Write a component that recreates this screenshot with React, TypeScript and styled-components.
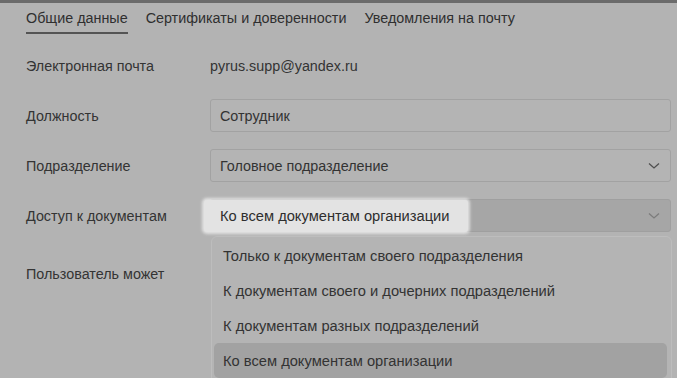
import styled, { createGlobalStyle } from "styled-components";

const GlobalStyle = createGlobalStyle`
    html, body {
        margin: 0;
        padding: 0;
        background: #b3b3b3;
    }
    body {
        font-family: "Liberation Sans", Arial, sans-serif;
        font-size: 14.35px;
        color: #333;
    }
`;

const accessOptions = [
    "Только к документам своего подразделения",
    "К документам своего и дочерних подразделений",
    "К документам разных подразделений",
    "Ко всем документам организации",
];

function Chevron({ faded }: { faded?: boolean }) {
    return (
        <ChevronIcon width="12" height="8" viewBox="0 0 12 8" $faded={faded}>
            <path d="M1 1.5 L6 6 L11 1.5" fill="none" stroke="currentColor" strokeWidth="1.3" />
        </ChevronIcon>
    );
}

function App() {
    return (
        <Page>
            <GlobalStyle />
            <Tabs>
                <Tab $active>Общие данные</Tab>
                <Tab>Сертификаты и доверенности</Tab>
                <Tab>Уведомления на почту</Tab>
            </Tabs>

            <Form>
                <Label>Электронная почта</Label>
                <Value>pyrus.supp@yandex.ru</Value>

                <Label>Должность</Label>
                <Field>Сотрудник</Field>

                <Label>Подразделение</Label>
                <Field>
                    Головное подразделение
                    <Chevron />
                </Field>

                <Label>Доступ к документам</Label>
                <SelectWrap>
                    <Field $open>
                        <Spotlight>Ко всем документам организации</Spotlight>
                        <Chevron faded />
                    </Field>
                    <Menu>
                        {accessOptions.map((opt, i) => (
                            <MenuItem key={opt} $hover={i === accessOptions.length - 1}>
                                {opt}
                            </MenuItem>
                        ))}
                    </Menu>
                </SelectWrap>

                <Label $top>Пользователь может</Label>
                <div />
            </Form>
        </Page>
    );
}

const Page = styled.div`
    height: 375px;
    overflow: hidden;
    border-top: 3px solid #6b6b6b;
`;

const Tabs = styled.div`
    display: flex;
    gap: 18px;
    padding: 0 26px;
    margin-bottom: 15px;
`;

const Tab = styled.div<{ $active?: boolean }>`
    padding-top: 7px;
    padding-bottom: 6px;
    line-height: 16px;
    color: #2f2f2f;
    border-bottom: 2px solid ${(p) => (p.$active ? "#545454" : "transparent")};
`;

const Form = styled.div`
    display: grid;
    grid-template-columns: 184px 461px;
    grid-auto-rows: 33px;
    row-gap: 17px;
    padding: 0 26px;
`;

const Label = styled.div<{ $top?: boolean }>`
    display: flex;
    align-items: center;
    color: #343434;
    padding-top: ${(p) => (p.$top ? "16px" : "0")};
`;

const Value = styled.div`
    display: flex;
    align-items: center;
    color: #343434;
`;

const Field = styled.div<{ $open?: boolean }>`
    box-sizing: border-box;
    height: 33px;
    display: flex;
    align-items: center;
    justify-content: space-between;
    padding: 0 10px 0 9px;
    border: 1px solid ${(p) => (p.$open ? "#9f9f9f" : "#a2a2a2")};
    border-radius: 3px;
    background: ${(p) => (p.$open ? "#a6a6a6" : "#b4b4b4")};
    color: #333;
`;

const SelectWrap = styled.div`
    position: relative;
`;

const Spotlight = styled.span`
    display: flex;
    align-items: center;
    height: 32px;
    margin-left: -16px;
    margin-top: 1px;
    padding: 0 18px 0 16px;
    font-size: 14.7px;
    background: #e3e3e3;
    border-radius: 3px;
    box-shadow: 0 0 3px 2px rgba(245, 245, 245, 0.7);
    color: #2e2e2e;
`;

const ChevronIcon = styled.svg<{ $faded?: boolean }>`
    color: ${(p) => (p.$faded ? "#7c7c7c" : "#4f4f4f")};
    flex-shrink: 0;
`;

const Menu = styled.div`
    position: absolute;
    top: 37px;
    left: 1px;
    right: -1px;
    box-sizing: border-box;
    padding: 1px 4px 20px 2px;
    background: #b4b4b4;
    border: 1px solid #bdbdbd;
    border-radius: 6px;
`;

const MenuItem = styled.div<{ $hover?: boolean }>`
    height: 35px;
    display: flex;
    align-items: center;
    padding-left: 9px;
    border-radius: 5px;
    font-size: 14.7px;
    background: ${(p) => (p.$hover ? "#a2a2a2" : "transparent")};
    color: #333;
`;

export default App;
